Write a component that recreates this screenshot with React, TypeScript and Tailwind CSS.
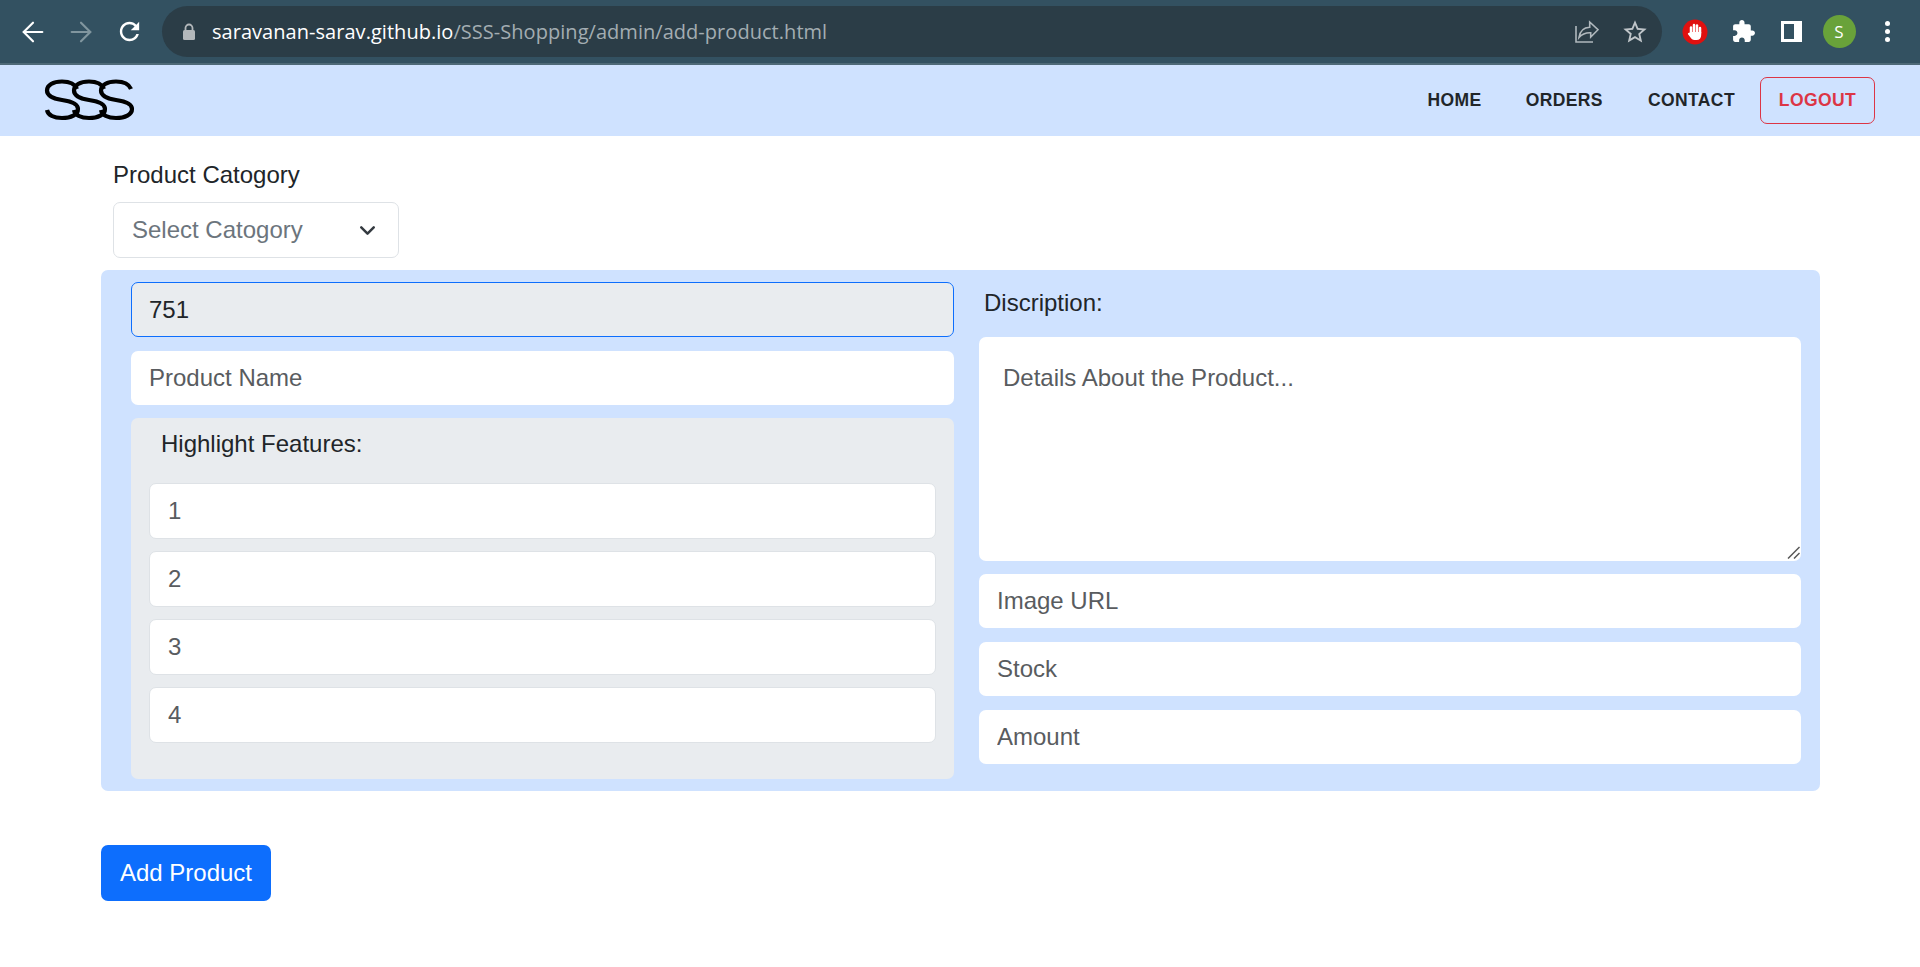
import React from 'react';
import { ArrowLeft, ArrowRight, ChevronDown } from 'lucide-react';

const inputCls =
    'block w-full h-[54px] rounded-[7px] bg-white pl-[18px] text-[24px] text-[#212529] outline-none placeholder:text-[#595c5f]';

const BrowserBar: React.FC = () => (
    <div className="flex h-[65px] items-center border-b-2 border-[#4e6977] bg-[#335161] pl-[9px] pr-[9px]">
        <div className="flex w-[48px] justify-center text-white">
            <ArrowLeft size={32} strokeWidth={1.6} />
        </div>
        <div className="flex w-[48px] justify-center text-[#81969f]">
            <ArrowRight size={32} strokeWidth={1.6} />
        </div>
        <div className="flex w-[48px] justify-center">
            <svg width="29" height="29" viewBox="0 0 24 24" fill="white">
                <path d="M17.65 6.35C16.2 4.9 14.21 4 12 4c-4.42 0-7.99 3.58-7.99 8s3.57 8 7.99 8c3.73 0 6.84-2.55 7.73-6h-2.08c-.82 2.33-3.04 4-5.65 4-3.31 0-6-2.69-6-6s2.69-6 6-6c1.66 0 3.14.69 4.22 1.78L13 11h7V4l-2.35 2.35z" />
            </svg>
        </div>
        <div className="ml-[9px] flex h-[51px] w-[1500px] items-center rounded-full bg-[#2b3d47] pl-[20px] pr-[3px]">
            <svg width="14" height="18" viewBox="0 0 14 18" className="shrink-0">
                <path d="M3.5 7V5a3.5 3.5 0 0 1 7 0v2" fill="none" stroke="#b3b8bb" strokeWidth="1.8" />
                <rect x="1" y="7" width="12" height="10" rx="1.5" fill="#b3b8bb" />
            </svg>
            <div className="ml-[16px] flex-1 text-[20px] tracking-[0.04px] [font-family:'Open_Sans',sans-serif]">
                <span className="text-white">saravanan-sarav.github.io</span>
                <span className="text-[#a3adb2]">/SSS-Shopping/admin/add-product.html</span>
            </div>
            <div className="flex w-[48px] justify-center">
                <svg width="24" height="24" viewBox="0 0 24 24" fill="none" stroke="#b0b8bd" strokeWidth="1.6">
                    <path d="M1 6V22H18" />
                    <path d="M4 17.5C5 11 9 7.5 14.7 7.3V2L23 9.7L15.7 17V12.7C11 12.5 7 14 4 17.5Z" />
                </svg>
            </div>
            <div className="flex w-[48px] justify-center">
                <svg width="28" height="28" viewBox="0 0 24 24" fill="#bfc5c9">
                    <path d="M22 9.24l-7.19-.62L12 2 9.19 8.63 2 9.24l5.46 4.73L5.82 21 12 17.27 18.18 21l-1.63-7.03L22 9.24zM12 15.4l-3.76 2.27 1-4.28-3.32-2.88 4.38-.38L12 6.1l1.71 4.04 4.38.38-3.32 2.88 1 4.28L12 15.4z" />
                </svg>
            </div>
        </div>
        <div className="ml-[9px] flex w-[48px] justify-center">
            <svg width="26" height="26" viewBox="0 0 26 26">
                <circle cx="13" cy="13" r="12.5" fill="#e0100f" />
                <g stroke="white" strokeWidth="2.5" strokeLinecap="round">
                    <path d="M9 14V8.5" />
                    <path d="M12 13V6" />
                    <path d="M15 13V6.5" />
                    <path d="M18 14V9" />
                </g>
                <path d="M7.8 13H19.2V16C19.2 19 17.5 21 14.5 21H12.5C10.5 21 9.5 20 8.5 18.5L6 15.3C5.4 14.3 6.8 13.2 7.8 14Z" fill="white" />
            </svg>
        </div>
        <div className="flex w-[48px] justify-center">
            <svg width="25" height="25" viewBox="0 0 24 24" fill="white">
                <path d="M20.5 11H19V7c0-1.1-.9-2-2-2h-4V3.5C13 2.12 11.88 1 10.5 1S8 2.12 8 3.5V5H4c-1.1 0-1.99.9-1.99 2v3.8H3.5c1.49 0 2.7 1.21 2.7 2.7s-1.21 2.7-2.7 2.7H2V20c0 1.1.9 2 2 2h3.8v-1.5c0-1.49 1.21-2.7 2.7-2.7 1.49 0 2.7 1.21 2.7 2.7V22H17c1.1 0 2-.9 2-2v-4h1.5c1.38 0 2.5-1.12 2.5-2.5S21.88 11 20.5 11z" />
            </svg>
        </div>
        <div className="flex w-[48px] justify-center">
            <svg width="21" height="21" viewBox="0 0 21 21">
                <path fillRule="evenodd" fill="white" d="M0 0H21V21H0ZM3 3V18H13V3Z" />
            </svg>
        </div>
        <div className="flex w-[48px] justify-center">
            <div className="flex h-[33px] w-[33px] items-center justify-center rounded-full bg-[#69a23a] text-[17px] text-white [font-family:'Open_Sans',sans-serif]">
                S
            </div>
        </div>
        <div className="flex w-[48px] flex-col items-center gap-[3px]">
            <span className="h-[5px] w-[5px] rounded-full bg-white" />
            <span className="h-[5px] w-[5px] rounded-full bg-white" />
            <span className="h-[5px] w-[5px] rounded-full bg-white" />
        </div>
    </div>
);

const Logo: React.FC = () => (
    <svg width="92" height="42" viewBox="0 0 92 42" fill="none" stroke="black" strokeWidth="4.2" className="-mt-[1px]">
        <path d="M34 10C32 5 26 2.5 19 2.5C10 2.5 4 6 4 11.5C4 17 9 19.5 19 21C30 22.5 35 25 35 30C35 35.5 28 39 19 39C11 39 5 36 4 31" />
        <path d="M61 10C59 5 53 2.5 46 2.5C37 2.5 31 6 31 11.5C31 17 36 19.5 46 21C57 22.5 62 25 62 30C62 35.5 55 39 46 39C38 39 32 36 31 31" />
        <path d="M88 10C86 5 80 2.5 73 2.5C64 2.5 58 6 58 11.5C58 17 63 19.5 73 21C84 22.5 89 25 89 30C89 35.5 82 39 73 39C65 39 59 36 58 31" />
    </svg>
);

const NavBar: React.FC = () => (
    <div className="flex h-[71px] items-center justify-between bg-[#cfe2ff] pl-[43px] pr-[45px]">
        <Logo />
        <div className="flex items-center text-[17.5px] font-bold tracking-[0.4px] text-[#212529]">
            <a>HOME</a>
            <a className="ml-[44px]">ORDERS</a>
            <a className="ml-[45px]">CONTACT</a>
            <button className="ml-[25px] h-[47px] w-[115px] rounded-[7px] border border-[#dc3545] font-bold text-[#dc3545]">
                LOGOUT
            </button>
        </div>
    </div>
);

const App: React.FC = () => {
    return (
        <div className="min-h-[967px] bg-white text-[#212529] [font-family:'Liberation_Sans',Arial,sans-serif]">
            <BrowserBar />
            <NavBar />

            <div className="pl-[101px] pr-[100px]">
                <div className="pl-[12px] pt-[25px]">
                    <label className="block h-[28px] text-[24px] leading-[28px]">Product Catogory</label>
                    <div className="mt-[13px] flex h-[56px] w-[286px] items-center justify-between rounded-[7px] border border-[#dee2e6] pl-[18px] pr-[18px] text-[24px] text-[#6c757d]">
                        <span>Select Catogory</span>
                        <ChevronDown size={25} strokeWidth={2.4} className="text-[#343a40]" />
                    </div>
                </div>

                <div className="mt-[12px] grid h-[521px] grid-cols-[823px_822px] gap-x-[25px] rounded-[7px] bg-[#cfe2ff] pl-[30px] pt-[12px]">
                    <div>
                        <input
                            readOnly
                            value="751"
                            className="block h-[55px] w-full rounded-[7px] border border-[#0d6efd] bg-[#e9ecef] pl-[17px] text-[24px] text-[#212529] outline-none"
                        />
                        <input placeholder="Product Name" className={`${inputCls} mt-[14px]`} />
                        <div className="mt-[13px] h-[361px] rounded-[7px] bg-[#e9ecef] px-[18px]">
                            <div className="flex h-[52px] items-center pl-[12px] text-[24px]">Highlight Features:</div>
                            <div className="mt-[13px] flex flex-col gap-[12px]">
                                {['1', '2', '3', '4'].map((n) => (
                                    <input
                                        key={n}
                                        placeholder={n}
                                        className="block h-[56px] w-full rounded-[7px] border border-[#dee2e6] bg-white pl-[18px] text-[24px] outline-none placeholder:text-[#595c5f]"
                                    />
                                ))}
                            </div>
                        </div>
                    </div>

                    <div>
                        <div className="flex h-[42px] items-center pl-[5px] text-[24px]">Discription:</div>
                        <div className="relative mt-[13px]">
                            <textarea
                                placeholder="Details About the Product..."
                                className="block h-[224px] w-full resize-none rounded-[7px] bg-white pl-[24px] pt-[23px] text-[24px] outline-none placeholder:text-[#595c5f]"
                            />
                            <svg width="13" height="13" viewBox="0 0 13 13" stroke="#555" strokeWidth="1.5" className="absolute bottom-[2px] right-[1px]">
                                <path d="M1 12.5L12.5 1" />
                                <path d="M7 12.5L12.5 7" />
                            </svg>
                        </div>
                        <input placeholder="Image URL" className={`${inputCls} mt-[13px]`} />
                        <input placeholder="Stock" className={`${inputCls} mt-[14px]`} />
                        <input placeholder="Amount" className={`${inputCls} mt-[14px]`} />
                    </div>
                </div>

                <button className="mt-[54px] h-[56px] w-[170px] rounded-[7px] bg-[#0d6efd] text-[24px] text-white">
                    Add Product
                </button>
            </div>
        </div>
    );
};

export default App;
